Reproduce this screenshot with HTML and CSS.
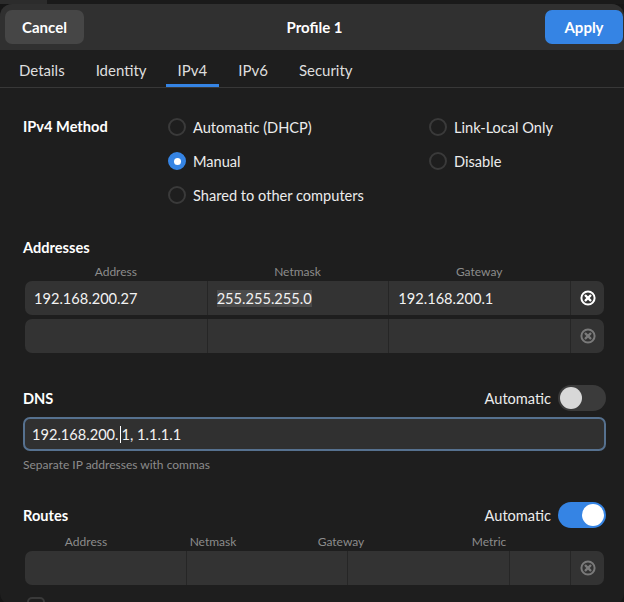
FILE: index.html
```html
<!DOCTYPE html>
<html>
<head>
<meta charset="utf-8">
<link rel="stylesheet" href="styles.css">
</head>
<body>
<div class="backdrop"><div class="bd-left"></div><div class="bd-right"></div></div>
<div class="dialog">
  <header class="headerbar">
    <button class="btn cancel">Cancel</button>
    <div class="title">Profile 1</div>
    <button class="btn apply">Apply</button>
  </header>
  <nav class="tabs">
    <span class="tab">Details</span>
    <span class="tab">Identity</span>
    <span class="tab active">IPv4</span>
    <span class="tab">IPv6</span>
    <span class="tab">Security</span>
  </nav>
  <main class="content">
    <div class="method">
      <div class="heading method-label">IPv4 Method</div>
      <label class="radio"><span class="dot"></span>Automatic (DHCP)</label>
      <label class="radio"><span class="dot"></span>Link-Local Only</label>
      <label class="radio"><span class="dot checked"></span>Manual</label>
      <label class="radio"><span class="dot"></span>Disable</label>
      <label class="radio"><span class="dot"></span>Shared to other computers</label>
    </div>

    <div class="heading sect-title">Addresses</div>
    <div class="colheads addr-cols">
      <span>Address</span><span>Netmask</span><span>Gateway</span><span></span>
    </div>
    <div class="rows">
      <div class="trow addr-cols">
        <div class="cell">192.168.200.27</div>
        <div class="cell"><span class="sel">255.255.255.0</span></div>
        <div class="cell">192.168.200.1</div>
        <div class="cell icon-cell active-icon">
          <svg viewBox="0 0 16 16" width="16" height="16"><circle cx="8" cy="8" r="6.6" fill="none" stroke="currentColor" stroke-width="2"/><path d="M5.6 5.6l4.8 4.8M10.4 5.6l-4.8 4.8" stroke="currentColor" stroke-width="2.3" stroke-linecap="round"/></svg>
        </div>
      </div>
      <div class="trow addr-cols">
        <div class="cell"></div>
        <div class="cell"></div>
        <div class="cell"></div>
        <div class="cell icon-cell dim-icon">
          <svg viewBox="0 0 16 16" width="16" height="16"><circle cx="8" cy="8" r="6.6" fill="none" stroke="currentColor" stroke-width="2"/><path d="M5.6 5.6l4.8 4.8M10.4 5.6l-4.8 4.8" stroke="currentColor" stroke-width="2.3" stroke-linecap="round"/></svg>
        </div>
      </div>
    </div>

    <div class="sect-row dns-row">
      <div class="heading">DNS</div>
      <div class="auto"><span>Automatic</span><span class="switch"><span class="knob"></span></span></div>
    </div>
    <div class="entry">192.168.200.<span class="caret"></span>1, 1.1.1.1</div>
    <div class="hint">Separate IP addresses with commas</div>

    <div class="sect-row routes-row">
      <div class="heading">Routes</div>
      <div class="auto"><span>Automatic</span><span class="switch on"><span class="knob"></span></span></div>
    </div>
    <div class="colheads route-heads">
      <span class="rh1">Address</span><span class="rh2">Netmask</span><span class="rh3">Gateway</span><span class="rh4">Metric</span>
    </div>
    <div class="trow route-cols">
      <div class="cell"></div>
      <div class="cell"></div>
      <div class="cell"></div>
      <div class="cell"></div>
      <div class="cell icon-cell dim-icon">
        <svg viewBox="0 0 16 16" width="16" height="16"><circle cx="8" cy="8" r="6.6" fill="none" stroke="currentColor" stroke-width="2"/><path d="M5.6 5.6l4.8 4.8M10.4 5.6l-4.8 4.8" stroke="currentColor" stroke-width="2.3" stroke-linecap="round"/></svg>
      </div>
    </div>
    <div class="checkbox"></div>
  </main>
</div>
</body>
</html>
```
FILE: styles.css
```css
html, body {
  margin: 0;
  padding: 0;
}
body {
  width: 624px;
  height: 602px;
  overflow: hidden;
  background: #161616;
  font-family: Lato, "Noto Sans", sans-serif;
  color: #ffffff;
  font-size: 14.6px;
}
.backdrop {
  display: flex;
  height: 4px;
}
.bd-left {
  width: 47px;
  background: #2c2c2c;
}
.bd-right {
  flex: 1;
  background: #1a1a1a;
}
.dialog {
  height: 601px;
  background: #1e1e1e;
  border-radius: 12px;
  overflow: hidden;
}
.headerbar {
  display: flex;
  align-items: center;
  height: 46px;
  padding: 0 1px 0 5px;
  background: #303030;
  box-sizing: border-box;
}
.btn {
  height: 34px;
  border: 0;
  border-radius: 7px;
  font-family: Lato, "Noto Sans", sans-serif;
  font-weight: 700;
  font-size: 15px;
  color: #ffffff;
  padding: 0;
}
.cancel {
  width: 79px;
  background: #464646;
}
.apply {
  width: 78px;
  background: #3584e4;
}
.title {
  flex: 1;
  text-align: center;
  font-weight: 700;
  font-size: 15px;
}
.tabs {
  display: flex;
  gap: 7px;
  height: 38px;
  padding-left: 7px;
  border-bottom: 1px solid #383838;
  box-sizing: border-box;
}
.tab {
  display: flex;
  align-items: center;
  padding: 6px 12px 0;
  border-bottom: 3px solid transparent;
  color: #dedede;
  font-size: 15px;
}
.tab.active {
  border-bottom-color: #3584e4;
}
.content {
  padding: 22px 18px 0 23px;
}
.heading {
  font-weight: 700;
  font-size: 14.6px;
}
.method {
  display: grid;
  grid-template-columns: 145px 261px 1fr;
  grid-template-rows: repeat(3, 34px);
}
.method-label {
  grid-row: 1 / span 3;
  line-height: 34px;
}
.radio {
  display: flex;
  align-items: center;
  gap: 7px;
  color: #ececec;
}
.dot {
  width: 18px;
  height: 18px;
  box-sizing: border-box;
  border: 2px solid #3a3a3a;
  border-radius: 50%;
  display: flex;
  align-items: center;
  justify-content: center;
}
.dot.checked {
  background: #3584e4;
  border-color: #3584e4;
}
.dot.checked::after {
  content: "";
  width: 7px;
  height: 7px;
  border-radius: 50%;
  background: #ffffff;
}
.sect-title {
  margin-top: 26px;
  line-height: 20px;
}
.colheads {
  margin: 6px 2px 0;
  line-height: 16px;
  font-size: 12px;
  color: #8c8c8c;
}
.addr-cols {
  display: grid;
  grid-template-columns: 1fr 1fr 1fr 34px;
}
.colheads.addr-cols span {
  text-align: center;
}
.rows {
  display: flex;
  flex-direction: column;
  gap: 4px;
  margin: 1px 2px 0;
}
.trow {
  height: 34px;
  background: #333333;
  border-radius: 7px;
  overflow: hidden;
}
.cell {
  display: flex;
  align-items: center;
  padding-left: 9px;
  color: #f2f2f2;
}
.cell + .cell {
  border-left: 1px solid #262626;
}
.sel {
  background: #4a4a4a;
}
.icon-cell {
  padding: 0;
  justify-content: center;
}
.active-icon {
  color: #ffffff;
}
.dim-icon {
  color: #7a7a7a;
}
.sect-row {
  display: flex;
  justify-content: space-between;
  align-items: center;
  height: 26px;
}
.dns-row {
  margin-top: 32px;
}
.routes-row {
  margin-top: 29px;
}
.auto {
  display: flex;
  align-items: center;
  gap: 7px;
  color: #ececec;
}
.switch {
  width: 48px;
  height: 26px;
  border-radius: 13px;
  background: #3b3b3b;
  display: flex;
  align-items: center;
  padding: 0 2px;
  box-sizing: border-box;
}
.switch .knob {
  width: 22px;
  height: 22px;
  border-radius: 50%;
  background: #d8d8d8;
}
.switch.on {
  background: #3584e4;
  justify-content: flex-end;
}
.switch.on .knob {
  background: #ffffff;
}
.entry {
  margin-top: 6px;
  height: 34px;
  box-sizing: border-box;
  border: 2px solid #56718f;
  border-radius: 7px;
  background: #303030;
  display: flex;
  align-items: center;
  padding-left: 7px;
  color: #f2f2f2;
}
.caret {
  display: inline-block;
  width: 1px;
  height: 17px;
  background: #ffffff;
  margin: 0 1px;
}
.hint {
  margin-top: 6px;
  line-height: 16px;
  font-size: 12px;
  color: #8c8c8c;
}
.route-heads {
  display: flex;
}
.route-heads span {
  text-align: center;
}
.rh1 { width: 122px; }
.rh2 { width: 132px; }
.rh3 { width: 124px; }
.rh4 { width: 172px; }
.route-cols {
  display: grid;
  grid-template-columns: 161px 161px 162px 1fr 34px;
  margin: 1px 2px 0;
}
.checkbox {
  margin: 12px 0 0 4px;
  width: 18px;
  height: 18px;
  box-sizing: border-box;
  border: 2px solid #3a3a3a;
  border-radius: 5px;
}
```
